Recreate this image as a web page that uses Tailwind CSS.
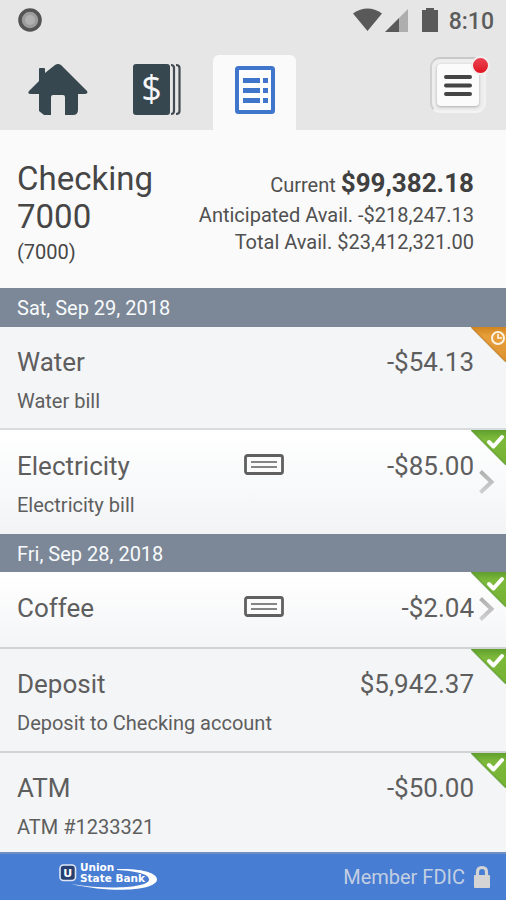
<!DOCTYPE html>
<html lang="en">
<head>
<meta charset="utf-8">
<meta name="viewport" content="width=device-width, initial-scale=1">
<title>Checking 7000</title>
<script src="https://cdn.jsdelivr.net/npm/@tailwindcss/browser@4"></script>
</head>
<body class="flex min-h-screen flex-col bg-[#f4f5f7] font-['Roboto',sans-serif] text-[#5e5e5e]">
<svg class="absolute size-0" aria-hidden="true">
  <defs>
    <linearGradient id="green" x1="0" y1="0" x2="0" y2="1"><stop offset="0" stop-color="#5f9f2c"/><stop offset=".25" stop-color="#7db93b"/><stop offset="1" stop-color="#74b234"/></linearGradient>
    <linearGradient id="orange" x1="0" y1="0" x2="0" y2="1"><stop offset="0" stop-color="#cf8420"/><stop offset=".25" stop-color="#e79f3a"/><stop offset="1" stop-color="#dd9230"/></linearGradient>
    <linearGradient id="chev" x1="0" y1="0" x2="0" y2="1"><stop offset="0" stop-color="#b0b0b0"/><stop offset="1" stop-color="#cfcfcf"/></linearGradient>
    <symbol id="cleared" viewBox="0 0 35 35">
      <path d="M0 0H35V35Z" fill="url(#green)"/>
      <path d="M0 0L35 35" stroke="#4f8f22" stroke-opacity=".6" stroke-width="1.5"/>
      <path d="M18 12l4.500 4.500L31 7" fill="none" stroke="#fff" stroke-width="4" stroke-linecap="round" stroke-linejoin="round"/>
    </symbol>
    <symbol id="pending" viewBox="0 0 35 35">
      <path d="M0 0H35V35Z" fill="url(#orange)"/>
      <path d="M0 0L35 35" stroke="#b87012" stroke-opacity=".6" stroke-width="1.500"/>
      <circle cx="27" cy="11" r="6" fill="none" stroke="#fdf3e4" stroke-width="2"/>
      <path d="M27 7v4h4" fill="none" stroke="#fdf3e4" stroke-width="1.600"/>
    </symbol>
    <symbol id="check" viewBox="0 0 40 21">
      <rect x="1.500" y="1.500" width="37" height="18" rx="2" fill="#fcfcfc" stroke="#606060" stroke-width="2.800"/>
      <path d="M7 8h26M7 13h26" stroke="#858585" stroke-width="1.800"/>
    </symbol>
    <symbol id="chevron" viewBox="0 0 16 24">
      <path d="M1.500 1.500L12.500 12L1.500 22.500" fill="none" stroke="url(#chev)" stroke-width="4"/>
    </symbol>
  </defs>
</svg>

<header class="bg-[#e6e6e6]">
  <div class="flex h-10 items-center justify-between pr-3 pl-[18px]">
    <svg class="size-6" viewBox="0 0 24 24" aria-hidden="true"><circle cx="12" cy="12" r="10" fill="#9c9c9c" stroke="#545454" stroke-width="3.600"/><circle cx="12" cy="12" r="5" fill="#b0b0b0"/></svg>
    <div class="flex items-center">
      <svg class="h-6 w-[86px]" viewBox="0 0 86 24" aria-hidden="true">
        <path d="M0 5.500Q14.500-4.500 29 5.500L14.500 23Z" fill="#595959"/>
        <path d="M55 1V24H46V10Z" fill="#aeaeae"/><path d="M32 24L46 10V24Z" fill="#595959"/>
        <path d="M69 2h4V0h8v2h4v22H69Z" fill="#595959"/>
      </svg>
      <span class="ml-2.5 pt-1 text-[23px] leading-9 font-medium text-[#5c5c5c]">8:10</span>
    </div>
  </div>
  <nav class="flex h-[90px] items-end justify-between pr-5" aria-label="Main">
    <div class="flex h-[75px]">
      <a href="#home" aria-label="Home" class="flex w-[116px] pt-2 pl-7">
        <svg class="h-[54px] w-[60px]" viewBox="0 0 60 54"><path d="M11 6Q11 5 12 5H16Q17 5 17 6V10L27 2Q30 0 33 2L59 28Q60.500 31 57 31H50V47Q50 52 45 52H37V34Q37 32 35 32H25Q23 32 23 34V52H16L11 48V31H3Q-1 31 1 28L11 18Z" fill="#37474f"/></svg>
      </a>
      <a href="#accounts" aria-label="Accounts" class="flex w-[97px] pt-2 pl-4">
        <svg class="h-[54px] w-[50px]" viewBox="0 0 50 54"><rect x="1" y="1" width="37" height="51" rx="3" fill="#37474f"/><path d="M39 2Q42 2 42 5V48Q42 51 39 51M44 2Q47.500 2 47.500 5V48Q47.500 51 44 51" fill="none" stroke="#444b50" stroke-width="2.200"/><text x="19.500" y="38" text-anchor="middle" font-family="Open Sans" font-size="36" fill="#f4f6f8">$</text></svg>
      </a>
      <a href="#register" aria-label="Register" aria-current="page" class="flex w-[83px] justify-center rounded-t-md bg-[#fafafa] pt-[11px]">
        <svg class="h-12 w-10" viewBox="0 0 40 48"><rect x="2" y="2" width="36" height="44" rx="1.500" fill="#fdfdfe" stroke="#3f76cb" stroke-width="4"/><path d="M8 14.500H25M8 24.500H25M8 34.500H25M28 14.500h5M28 24.500h5M28 34.500h5" stroke="#3f76cb" stroke-width="5"/></svg>
      </a>
    </div>
    <div class="relative mb-[17px]">
      <button type="button" aria-label="Menu" class="block rounded-[10px] border-2 border-t-[#c8c8c8] border-r-[#f1f1f1] border-b-[#f4f4f4] border-l-[#d0d0d0] bg-[#eeeeee] p-[5px]">
        <svg class="h-[42px] w-[42px] rounded-sm bg-[#fbfbfb] shadow-[0_1px_3px_#aaa]" viewBox="0 0 42 42"><path d="M9 13H33M9 21.500H33M9 30H33" stroke="#444" stroke-width="4" stroke-linecap="round"/></svg>
      </button>
      <span class="absolute -top-px -right-1 size-[19px] rounded-full border-2 border-[#f3eeee] bg-linear-to-b from-[#ea4050] to-[#e0101f]"></span>
    </div>
  </nav>
</header>

<main class="flex grow flex-col">
  <section class="flex h-[158px] justify-between bg-[#fafafa] pt-[30px] pr-8 pl-[17px] text-[#464646]">
    <div>
      <h1 class="w-40 text-[33px] leading-[38px]">Checking 7000</h1>
      <p class="text-xl leading-8">(7000)</p>
    </div>
    <div class="pt-[7px] text-right text-xl leading-[27px] text-[#505050]">
      <p class="leading-[33px]">Current <strong class="text-[26px] font-bold text-[#404040]">$99,382.18</strong></p>
      <p>Anticipated Avail. -$218,247.13</p>
      <p>Total Avail. $23,412,321.00</p>
    </div>
  </section>

  <h2 class="h-[39px] bg-[#7c8897] pl-[17px] text-xl leading-10 text-[#f8fafc]">Sat, Sep 29, 2018</h2>
  <ul>
    <li class="relative flex h-[103px] justify-between border-b-2 border-[#d9dcde] bg-[#f4f5f7] pt-[19px] pr-8 pl-[17px]">
      <div><h3 class="text-[26px] leading-8">Water</h3><p class="mt-[11px] text-xl leading-6">Water bill</p></div>
      <span class="text-[26px] leading-8">-$54.13</span>
      <svg class="absolute top-0 right-0 size-[35px]" role="img" aria-label="Pending"><use href="#pending"/></svg>
    </li>
    <li>
      <a href="#electricity" class="relative flex h-[104px] justify-between bg-linear-to-b from-white to-[#f2f4f6] pt-5 pr-8 pl-[17px]">
        <div class="w-[227px]"><h3 class="text-[26px] leading-8">Electricity</h3><p class="mt-[11px] text-xl leading-6">Electricity bill</p></div>
        <svg class="mt-1 h-[21px] w-10" role="img" aria-label="Check image"><use href="#check"/></svg>
        <span class="grow text-right text-[26px] leading-8">-$85.00</span>
        <svg class="absolute top-10 right-[11px] h-6 w-4" aria-hidden="true"><use href="#chevron"/></svg>
        <svg class="absolute top-0 right-0 size-[35px]" role="img" aria-label="Cleared"><use href="#cleared"/></svg>
      </a>
    </li>
  </ul>

  <h2 class="h-[38px] bg-[#7c8897] pl-[17px] text-xl leading-10 text-[#f8fafc]">Fri, Sep 28, 2018</h2>
  <ul>
    <li>
      <a href="#coffee" class="relative flex h-[77px] justify-between border-b-2 border-[#d0d2d4] bg-linear-to-b from-white to-[#f4f5f7] pt-5 pr-8 pl-[17px]">
        <div class="w-[227px]"><h3 class="text-[26px] leading-8">Coffee</h3></div>
        <svg class="mt-1 h-[21px] w-10" role="img" aria-label="Check image"><use href="#check"/></svg>
        <span class="grow text-right text-[26px] leading-8">-$2.04</span>
        <svg class="absolute top-[25px] right-[11px] h-6 w-4" aria-hidden="true"><use href="#chevron"/></svg>
        <svg class="absolute top-0 right-0 size-[35px]" role="img" aria-label="Cleared"><use href="#cleared"/></svg>
      </a>
    </li>
    <li class="relative flex h-[104px] justify-between border-b-2 border-[#d0d2d4] bg-[#f4f5f7] pt-[19px] pr-8 pl-[17px]">
      <div><h3 class="text-[26px] leading-8">Deposit</h3><p class="mt-[11px] text-xl leading-6">Deposit to Checking account</p></div>
      <span class="text-[26px] leading-8">$5,942.37</span>
      <svg class="absolute top-0 right-0 size-[35px]" role="img" aria-label="Cleared"><use href="#cleared"/></svg>
    </li>
    <li class="relative flex justify-between bg-[#f4f5f7] pt-[19px] pr-8 pl-[17px]">
      <div><h3 class="text-[26px] leading-8">ATM</h3><p class="mt-[11px] text-xl leading-6">ATM #1233321</p></div>
      <span class="text-[26px] leading-8">-$50.00</span>
      <svg class="absolute top-0 right-0 size-[35px]" role="img" aria-label="Cleared"><use href="#cleared"/></svg>
    </li>
  </ul>
</main>

<footer class="flex h-12 items-center justify-between border-t-2 border-[#6f8fc4] bg-[#477dd2] pr-[15px] pl-[57px]">
  <svg class="h-[30px] w-[102px]" viewBox="0 0 102 30" role="img" aria-label="Union State Bank">
    <path d="M60 7C88 6 101 12 100 18C98 28 58 32 14 22C50 28 90 26 92 18C93 13 82 9 60 8Z" fill="#fff"/>
    <rect x="3" y="3" width="15.500" height="15.500" rx="3.500" fill="#27406f" stroke="#dfe7f5" stroke-width="1.600"/>
    <text x="10.700" y="15" text-anchor="middle" font-family="DejaVu Sans" font-weight="bold" font-size="11" fill="#fff">U</text>
    <g font-family="DejaVu Sans" font-weight="bold" font-size="10.500" fill="#fff"><text x="23" y="9">Union</text><text x="23" y="20">State Bank</text></g>
  </svg>
  <div class="flex items-center gap-2 text-xl text-[#c3cfe3]">
    <span>Member FDIC</span>
    <svg class="h-6 w-[18px]" viewBox="0 0 18 24" aria-hidden="true"><path d="M4.500 12V7Q4.500 2.500 9 2.500T13.500 7V12" fill="none" stroke="#d4d4d4" stroke-width="3.200"/><rect x="1" y="10" width="16" height="13" rx="1" fill="#d4d4d4"/></svg>
  </div>
</footer>
</body>
</html>
